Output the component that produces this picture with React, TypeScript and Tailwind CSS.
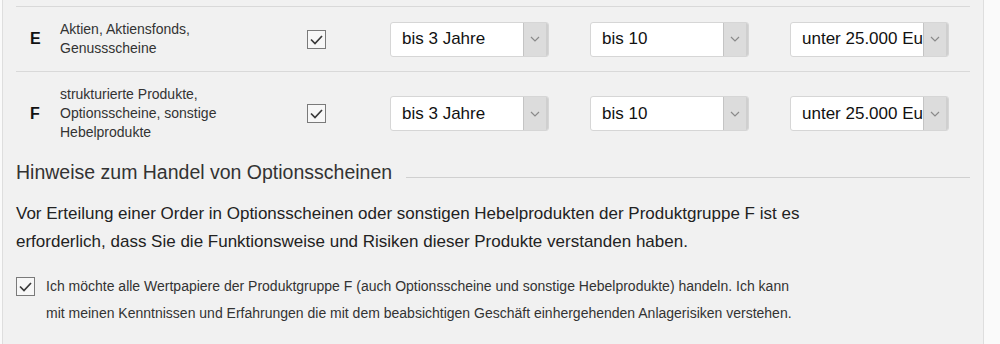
import React from "react";

const font = { fontFamily: '"Liberation Sans", Arial, sans-serif' };

function Check({ className = "" }: { className?: string }) {
  return (
    <div className={"w-[19px] h-[19px] border border-[#7a7a7a] bg-[#f7f7f7] flex items-center justify-center shrink-0 " + className}>
      <svg width="17" height="17" viewBox="0 0 17 17">
        <polyline points="3,8.5 7,12.5 14,5" fill="none" stroke="#3a3a3a" strokeWidth="1.7" />
      </svg>
    </div>
  );
}

function Select({ value }: { value: string }) {
  return (
    <div className="relative w-[159px] h-[35px] bg-white border border-[#d6d6d6] rounded-[3px] overflow-hidden shrink-0">
      <div className="h-full pl-[11px] flex items-center text-[17px] text-[#111] whitespace-nowrap">
        {value}
      </div>
      <div className="absolute right-0 top-0 w-[25px] h-full bg-[#dcdcdc] border-l border-[#c4c4c4] border-r-2 border-r-[#cfcfcf] flex items-center justify-center">
        <svg width="10" height="6" viewBox="0 0 10 6">
          <polyline points="1,1 5,5 9,1" fill="none" stroke="#8a8a8a" strokeWidth="1.2" />
        </svg>
      </div>
    </div>
  );
}

function Row({ letter, lines, h }: { letter: string; lines: string[]; h: string }) {
  return (
    <div className={"border-t border-[#d9d9d9] flex items-center " + h}>
      <div className="w-[44px] pl-[14px] text-[16px] font-bold text-[#111]">{letter}</div>
      <div className="w-[247px] text-[14px] leading-[19px] text-[#333]">
        {lines.map((l, i) => (
          <div key={i}>{l}</div>
        ))}
      </div>
      <Check className="mr-[64px]" />
      <div className="flex gap-[41px]">
        <Select value="bis 3 Jahre" />
        <Select value="bis 10" />
        <Select value="unter 25.000 Euro" />
      </div>
    </div>
  );
}

export default function App() {
  return (
    <div className="w-[1000px] h-[344px] bg-[#fafafa] overflow-hidden" style={font}>
      <div className="ml-[2px] w-[982px] h-[344px] bg-[#f1f1f1] border-l border-r border-[#dedede] px-[13px] pt-[6px]">
        <Row letter="E" lines={["Aktien, Aktiensfonds,", "Genussscheine"]} h="h-[65px]" />
        <Row
          letter="F"
          lines={["strukturierte Produkte,", "Optionsscheine, sonstige", "Hebelprodukte"]}
          h="h-[84px]"
        />
        <div className="flex items-center gap-[14px] mt-[4px] h-[28px]">
          <div className="text-[19.5px] text-[#333] whitespace-nowrap">Hinweise zum Handel von Optionsscheinen</div>
          <div className="flex-1 h-px bg-[#d0d0d0] mt-[8px]" />
        </div>
        <div className="mt-[13px] text-[17px] leading-[28px] text-[#222]">
          <div>Vor Erteilung einer Order in Optionsscheinen oder sonstigen Hebelprodukten der Produktgruppe F ist es</div>
          <div>erforderlich, dass Sie die Funktionsweise und Risiken dieser Produkte verstanden haben.</div>
        </div>
        <div className="mt-[17px] flex items-start">
          <Check className="mt-[4px] mr-[11px]" />
          <div className="text-[14px] leading-[27px] text-[#333]">
            <div>Ich möchte alle Wertpapiere der Produktgruppe F (auch Optionsscheine und sonstige Hebelprodukte) handeln. Ich kann</div>
            <div>mit meinen Kenntnissen und Erfahrungen die mit dem beabsichtigen Geschäft einhergehenden Anlagerisiken verstehen.</div>
          </div>
        </div>
      </div>
    </div>
  );
}
